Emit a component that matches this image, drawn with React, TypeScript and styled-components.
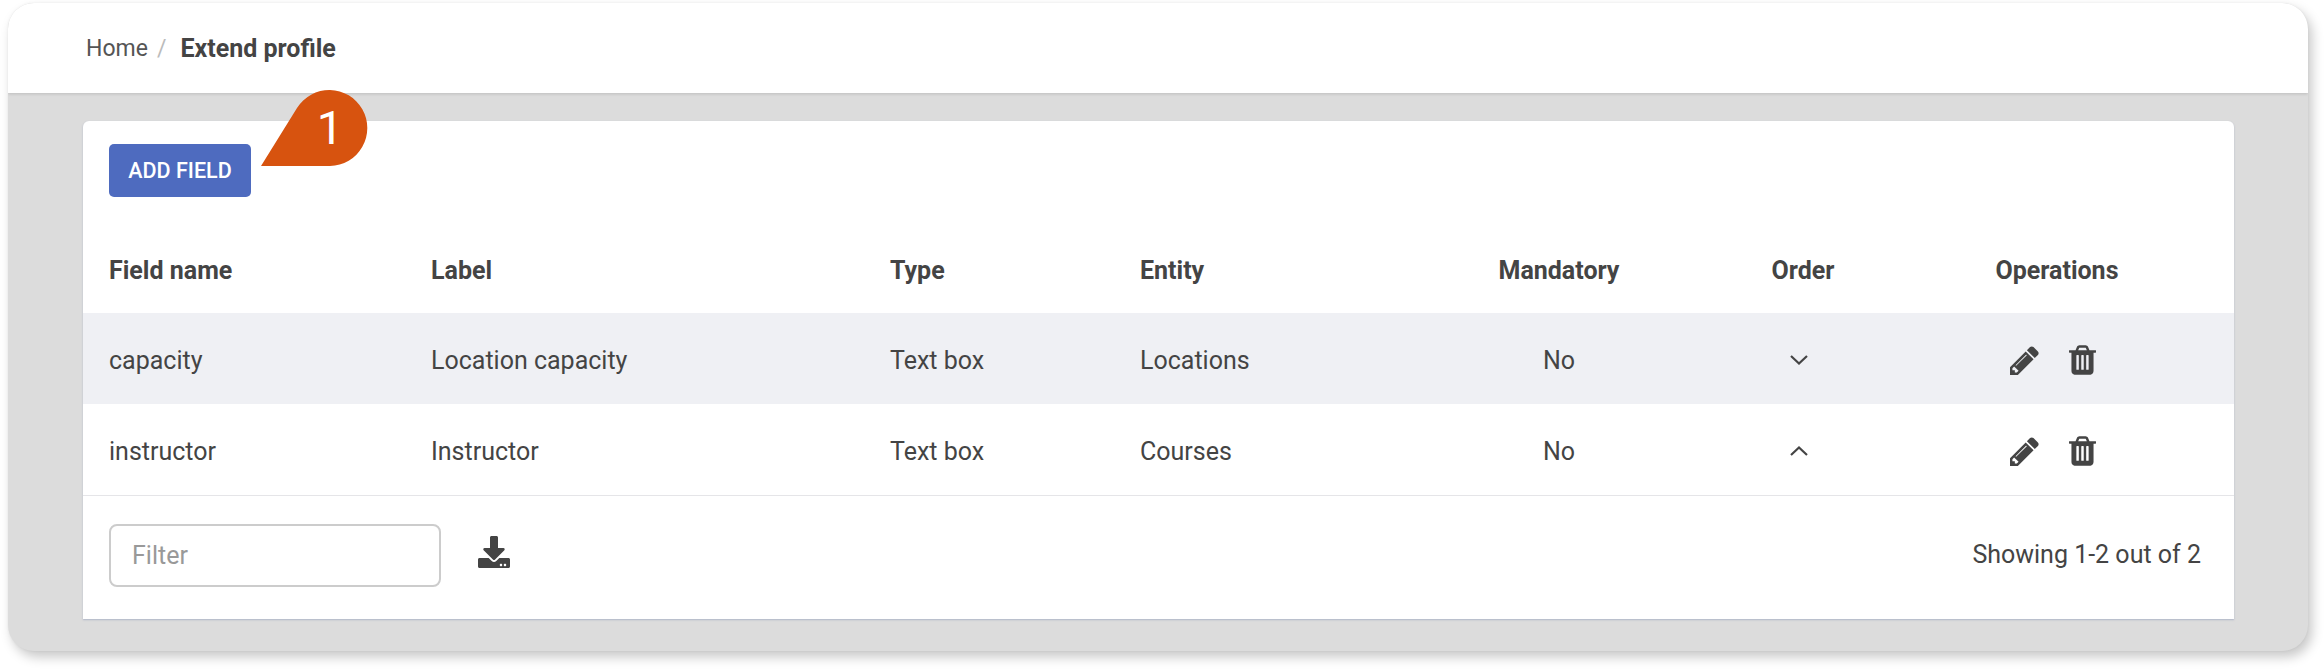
import React from "react";
import styled, { createGlobalStyle } from "styled-components";
import { FaDownload } from "react-icons/fa";

const Global = createGlobalStyle`
  html, body { margin: 0; padding: 0; background: #fff; }
  body { font-family: Roboto, "Liberation Sans", sans-serif; color: #444; }
`;

const Page = styled.div`
  width: 2324px;
  height: 671px;
  box-sizing: border-box;
  padding: 3px 16px 20px 8px;
`;

const Window = styled.div`
  height: 648px;
  border-radius: 26px;
  overflow: hidden;
  background: #dcdcdc;
  display: flex;
  flex-direction: column;
  box-shadow: 4px 6px 12px rgba(0, 0, 0, 0.22), 0 0 3px rgba(0, 0, 0, 0.05);
`;

const Breadcrumb = styled.div`
  height: 90px;
  flex: none;
  box-sizing: border-box;
  background: #fff;
  display: flex;
  align-items: center;
  padding: 1px 0 0 78px;
  font-size: 23px;
  box-shadow: 0 1px 3px rgba(0, 0, 0, 0.14);
  position: relative;
`;

const Crumb = styled.span`
  color: #555;
`;

const Slash = styled.span`
  color: #bbb;
  margin: 0 14px 0 9px;
`;

const Current = styled.span`
  font-weight: 700;
  font-size: 25px;
  color: #444;
`;

const Content = styled.main`
  flex: 1;
  padding: 28px 74px 32px 75px;
`;

const Panel = styled.section`
  height: 498px;
  background: #fff;
  border-radius: 6px 6px 0 0;
  position: relative;
  box-shadow: 0 1px 2px rgba(90, 110, 160, 0.35);
`;

const Toolbar = styled.div`
  padding: 23px 26px 0;
  line-height: 0;
`;

const AddButton = styled.button`
  width: 142px;
  height: 53px;
  border: 0;
  border-radius: 5px;
  padding: 0;
  background: #4e6bbf;
  color: #fff;
  font: 500 21.5px Roboto, sans-serif;
`;

const Callout = styled.div`
  position: absolute;
  left: 178px;
  top: -31px;
  width: 109px;
  height: 77px;
`;

const CalloutShape = styled.svg`
  position: absolute;
  inset: 0;
`;

const CalloutNumber = styled.span`
  position: absolute;
  left: 44px;
  top: 0;
  width: 50px;
  line-height: 76px;
  text-align: center;
  color: #fff;
  font-size: 47px;
  font-weight: 400;
`;

const Row = styled.div<{ $head?: boolean; $shaded?: boolean }>`
  display: grid;
  grid-template-columns: 322px 459px 250px 300px 238px 250px 258px;
  box-sizing: border-box;
  padding: ${(p) => (p.$head ? "30px" : "3px")} 0 0 26px;
  height: ${(p) => (p.$head ? "116px" : "91px")};
  align-items: center;
  font-size: 25px;
  font-weight: ${(p) => (p.$head ? 700 : 400)};
  background: ${(p) => (p.$shaded ? "#eff0f4" : "#fff")};
`;

const Centered = styled.div`
  display: flex;
  justify-content: center;
  align-items: center;
`;

const OrderCell = styled(Centered)`
  padding-right: 8px;
`;

const OpIcons = styled(Centered)`
  gap: 30px;
  padding-right: 8px;
`;

const Icon = styled.svg`
  display: block;
  fill: #444;
`;

const Footer = styled.div`
  border-top: 1px solid #e5e5e8;
  display: flex;
  align-items: flex-start;
  padding: 28px 33px 0 26px;
`;

const Filter = styled.input`
  width: 332px;
  height: 63px;
  box-sizing: border-box;
  border: 2px solid #ccc;
  border-radius: 8px;
  padding: 0 21px;
  font: 400 25px Roboto, sans-serif;
  color: #444;
  outline: 0;
  &::placeholder { color: #999; opacity: 1; }
`;

const DownloadSlot = styled.div`
  margin: 12px 0 0 37px;
  font-size: 32px;
  line-height: 0;
  color: #444;
`;

const Count = styled.div`
  margin-left: auto;
  font-size: 25px;
  line-height: 62px;
`;

const Pencil = () => (
  <Icon width="29" height="29" viewBox="128 128 1536 1536" aria-hidden="true">
    <path d="M491 1536l91-91-235-235-91 91v107h128v128h107zm523-928q0-22-22-22-10 0-17 7l-542 542q-7 7-7 17 0 22 22 22 10 0 17-7l542-542q7-7 7-17zm-54-192l416 416-832 832h-416v-416zm683 96q0 53-37 90l-166 166-416-416 166-165q36-38 90-38 53 0 91 38l235 234q37 39 37 91z" />
  </Icon>
);

const Trash = () => (
  <Icon width="27" height="30" viewBox="192 128 1408 1536" aria-hidden="true">
    <path d="M704 1376v-704q0-14-9-23t-23-9h-64q-14 0-23 9t-9 23v704q0 14 9 23t23 9h64q14 0 23-9t9-23zm256 0v-704q0-14-9-23t-23-9h-64q-14 0-23 9t-9 23v704q0 14 9 23t23 9h64q14 0 23-9t9-23zm256 0v-704q0-14-9-23t-23-9h-64q-14 0-23 9t-9 23v704q0 14 9 23t23 9h64q14 0 23-9t9-23zm-544-992h448l-48-117q-7-9-17-11h-317q-10 2-17 11zm928 32v64q0 14-9 23t-23 9h-96v948q0 83-47 143.5t-113 60.5h-832q-66 0-113-58.5t-47-141.5v-952h-96q-14 0-23-9t-9-23v-64q0-14 9-23t23-9h309l70-167q15-37 54-63t79-26h320q40 0 79 26t54 63l70 167h309q14 0 23 9t9 23z" />
  </Icon>
);

const Chevron = ({ up }: { up?: boolean }) => (
  <svg width="20" height="12" viewBox="0 0 20 12" aria-hidden="true">
    <path
      d={up ? "M2 10 L10 2.5 L18 10" : "M2 2 L10 9.5 L18 2"}
      fill="none"
      stroke="#444"
      strokeWidth="2.2"
    />
  </svg>
);

const rows = [
  { field: "capacity", label: "Location capacity", type: "Text box", entity: "Locations", up: false },
  { field: "instructor", label: "Instructor", type: "Text box", entity: "Courses", up: true },
];

export default function App() {
  return (
    <>
      <Global />
      <Page>
        <Window>
          <Breadcrumb>
            <Crumb>Home</Crumb>
            <Slash>/</Slash>
            <Current>Extend profile</Current>
          </Breadcrumb>
          <Content>
            <Panel>
              <Callout>
                <CalloutShape width="109" height="77" viewBox="0 0 109 77">
                  <path d="M0 76 L36 18 A38 38 0 1 1 69 76 Z" fill="#d7530f" />
                </CalloutShape>
                <CalloutNumber>1</CalloutNumber>
              </Callout>
              <Toolbar>
                <AddButton>ADD FIELD</AddButton>
              </Toolbar>
              <Row $head>
                <div>Field name</div>
                <div>Label</div>
                <div>Type</div>
                <div>Entity</div>
                <Centered>Mandatory</Centered>
                <Centered>Order</Centered>
                <Centered>Operations</Centered>
              </Row>
              {rows.map((r, i) => (
                <Row key={r.field} $shaded={i === 0}>
                  <div>{r.field}</div>
                  <div>{r.label}</div>
                  <div>{r.type}</div>
                  <div>{r.entity}</div>
                  <Centered>No</Centered>
                  <OrderCell>
                    <Chevron up={r.up} />
                  </OrderCell>
                  <OpIcons>
                    <Pencil />
                    <Trash />
                  </OpIcons>
                </Row>
              ))}
              <Footer>
                <Filter placeholder="Filter" />
                <DownloadSlot>
                  <FaDownload />
                </DownloadSlot>
                <Count>Showing 1-2 out of 2</Count>
              </Footer>
            </Panel>
          </Content>
        </Window>
      </Page>
    </>
  );
}
